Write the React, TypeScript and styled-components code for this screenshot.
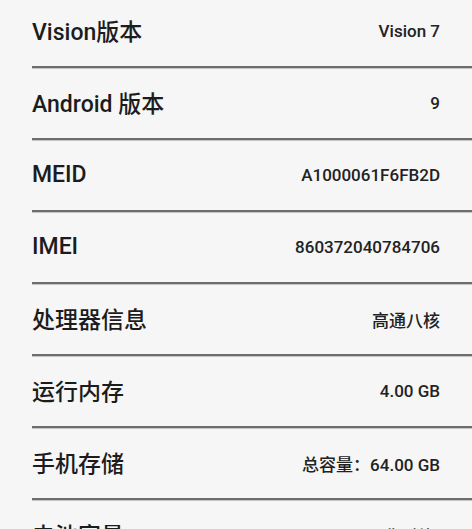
import React from 'react';
import styled, {createGlobalStyle} from 'styled-components';

const GlobalStyle = createGlobalStyle`
  html, body {
    margin: 0;
    padding: 0;
    background: #f6f6f6;
    overflow: hidden;
  }
  body {
    font-family: Roboto, "Noto Sans CJK SC", sans-serif;
    -webkit-font-smoothing: antialiased;
  }
`;

interface InfoItem {
  label: string;
  value: string;
}

const items: InfoItem[] = [
  {label: 'Vision版本', value: 'Vision 7'},
  {label: 'Android 版本', value: '9'},
  {label: 'MEID', value: 'A1000061F6FB2D'},
  {label: 'IMEI', value: '860372040784706'},
  {label: '处理器信息', value: '高通八核'},
  {label: '运行内存', value: '4.00 GB'},
  {label: '手机存储', value: '总容量：64.00 GB'},
  {label: '电池容量', value: '3000mAh(典型值)'},
];

const App: React.FC = () => {
  return (
    <>
      <GlobalStyle />
      <Page>
        <InfoList>
          {items.map((item) => (
            <InfoRow key={item.label}>
              <Label>{item.label}</Label>
              <Value>{item.value}</Value>
            </InfoRow>
          ))}
        </InfoList>
      </Page>
    </>
  );
};

const Page = styled.div`
  width: 472px;
  height: 529px;
  overflow: hidden;
  background: #f6f6f6;
`;

// list is scrolled a few pixels up in the screenshot
const InfoList = styled.div`
  display: flex;
  flex-direction: column;
  margin-top: -4px;
  padding-left: 32px;
`;

const InfoRow = styled.div`
  display: flex;
  align-items: center;
  justify-content: space-between;
  height: 70px;
  padding-right: 32px;
  border-bottom: 2px solid #6e6e6e;
  box-shadow: 0 1px 0 #c4c4c4;
`;

const Label = styled.div`
  font-size: 23px;
  font-weight: 500;
  color: #1c1c1c;
  margin-bottom: 2px;
`;

const Value = styled.div`
  font-size: 17px;
  font-weight: 500;
  color: #222222;
`;

export default App;
